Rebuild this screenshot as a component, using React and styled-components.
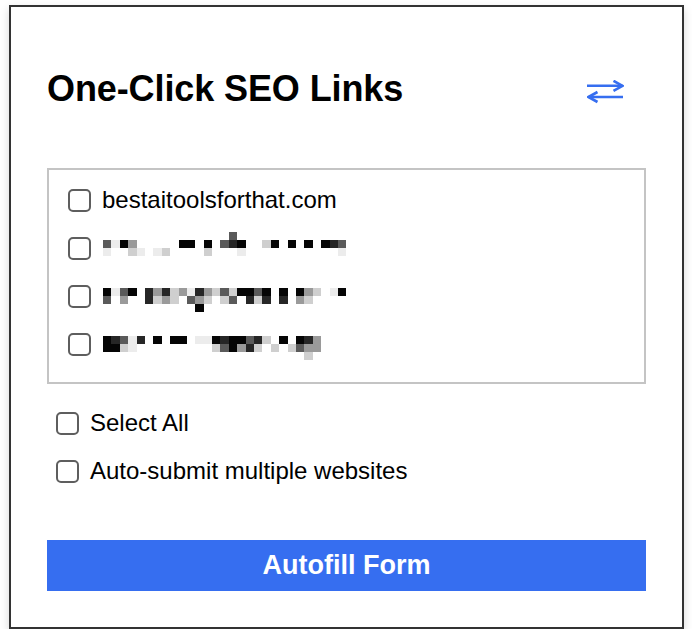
import * as React from "react";
import styled, { createGlobalStyle } from "styled-components";

const colors = {
  blue: "#366ef0",
  text: "#000000",
  border: "#c4c4c4",
  frame: "#333333",
  box: "#5e5e5e",
};

const shades = ["transparent", "#ececec", "#cfcfcf", "#9a9a9a", "#5a5a5a", "#262626", "#050505"];

// blurred entries: one string per mosaic row, digits are grey levels
const hiddenSites = [
  [
    "00000000000000040000000000000",
    "41630000066060456002606060654",
    "10021012000020001000000000001",
    "00000000000000000000000000000",
  ],
  [
    "00000000000000000000000000000",
    "61460535231532426646060632016",
    "40300523204320240525050320000",
    "00000000000600000000000000000",
  ],
  [
    "00000000000000000000000000000",
    "65415060660116566452060653000",
    "66210000000002463520202433000",
    "00000000000000000000000020000",
  ],
];

const GlobalStyle = createGlobalStyle`
  * {
    box-sizing: border-box;
  }
  body {
    margin: 0;
    background: #ffffff;
    font-family: "Liberation Sans", Arial, sans-serif;
    color: ${colors.text};
  }
`;

const Panel = styled.div`
  width: 675px;
  margin: 5px 0 0 9px;
  padding: 61px 36px 36px;
  border: 2px solid ${colors.frame};
  background: #ffffff;
  box-shadow: 0 4px 9px rgba(0, 0, 0, 0.16);
  display: flex;
  flex-direction: column;
`;

const Header = styled.div`
  display: flex;
  align-items: center;
  justify-content: space-between;
  height: 41px;
  margin-bottom: 59px;
`;

const Title = styled.h1`
  margin: 0;
  font-size: 36px;
  line-height: 41px;
  font-weight: bold;
  letter-spacing: -0.1px;
`;

const SwapButton = styled.button`
  display: flex;
  padding: 0;
  margin: 6px 22px 0 0;
  border: none;
  background: none;
  color: ${colors.blue};
  cursor: pointer;
`;

const SiteList = styled.div`
  border: 2px solid ${colors.border};
  padding: 6px 0 14px 19px;
  display: flex;
  flex-direction: column;
`;

const Row = styled.label`
  display: flex;
  align-items: center;
  height: 48px;
  gap: 11px;
  font-size: 24px;
  padding-left: ${(p) => (p.$inset ? "9px" : "0")};
`;

const Box = styled.input.attrs({ type: "checkbox" })`
  appearance: none;
  width: 23px;
  height: 23px;
  margin: 0;
  border: 2px solid ${colors.box};
  border-radius: 5px;
  background: #ffffff;
  flex-shrink: 0;
`;

const Options = styled.div`
  display: flex;
  flex-direction: column;
  margin-top: 15px;
`;

const Mosaic = styled.div`
  display: grid;
  grid-template-columns: repeat(29, 8.4px);
  grid-auto-rows: 8px;
  margin-left: 1px;
`;

const Cell = styled.span`
  background: ${(p) => shades[p.$level]};
`;

const Submit = styled.button`
  margin-top: 45px;
  height: 51px;
  border: none;
  background: ${colors.blue};
  color: #ffffff;
  font-family: "Liberation Sans", Arial, sans-serif;
  font-size: 27px;
  font-weight: bold;
  cursor: pointer;
`;

const SwapIcon = () => (
  <svg width="37" height="24" viewBox="0 0 37 24" fill="none" stroke="currentColor" strokeWidth="2.6">
    <path d="M0 5.8H35.5" />
    <path d="M26.5 0.8L35.5 5.8L26.5 10.8" />
    <path d="M1.5 17H36" />
    <path d="M10.5 12L1.5 17L10.5 22" />
  </svg>
);

const Blurred = ({ rows }) => (
  <Mosaic>
    {rows.map((line, r) =>
      line.split("").map((c, i) => <Cell key={`${r}-${i}`} $level={Number(c)} />)
    )}
  </Mosaic>
);

const App = () => (
  <>
    <GlobalStyle />
    <Panel>
      <Header>
        <Title>One-Click SEO Links</Title>
        <SwapButton aria-label="Switch">
          <SwapIcon />
        </SwapButton>
      </Header>
      <SiteList>
        <Row>
          <Box />
          bestaitoolsforthat.com
        </Row>
        {hiddenSites.map((rows, i) => (
          <Row key={i}>
            <Box />
            <Blurred rows={rows} />
          </Row>
        ))}
      </SiteList>
      <Options>
        <Row $inset>
          <Box />
          Select All
        </Row>
        <Row $inset>
          <Box />
          Auto-submit multiple websites
        </Row>
      </Options>
      <Submit>Autofill Form</Submit>
    </Panel>
  </>
);

export default App;
